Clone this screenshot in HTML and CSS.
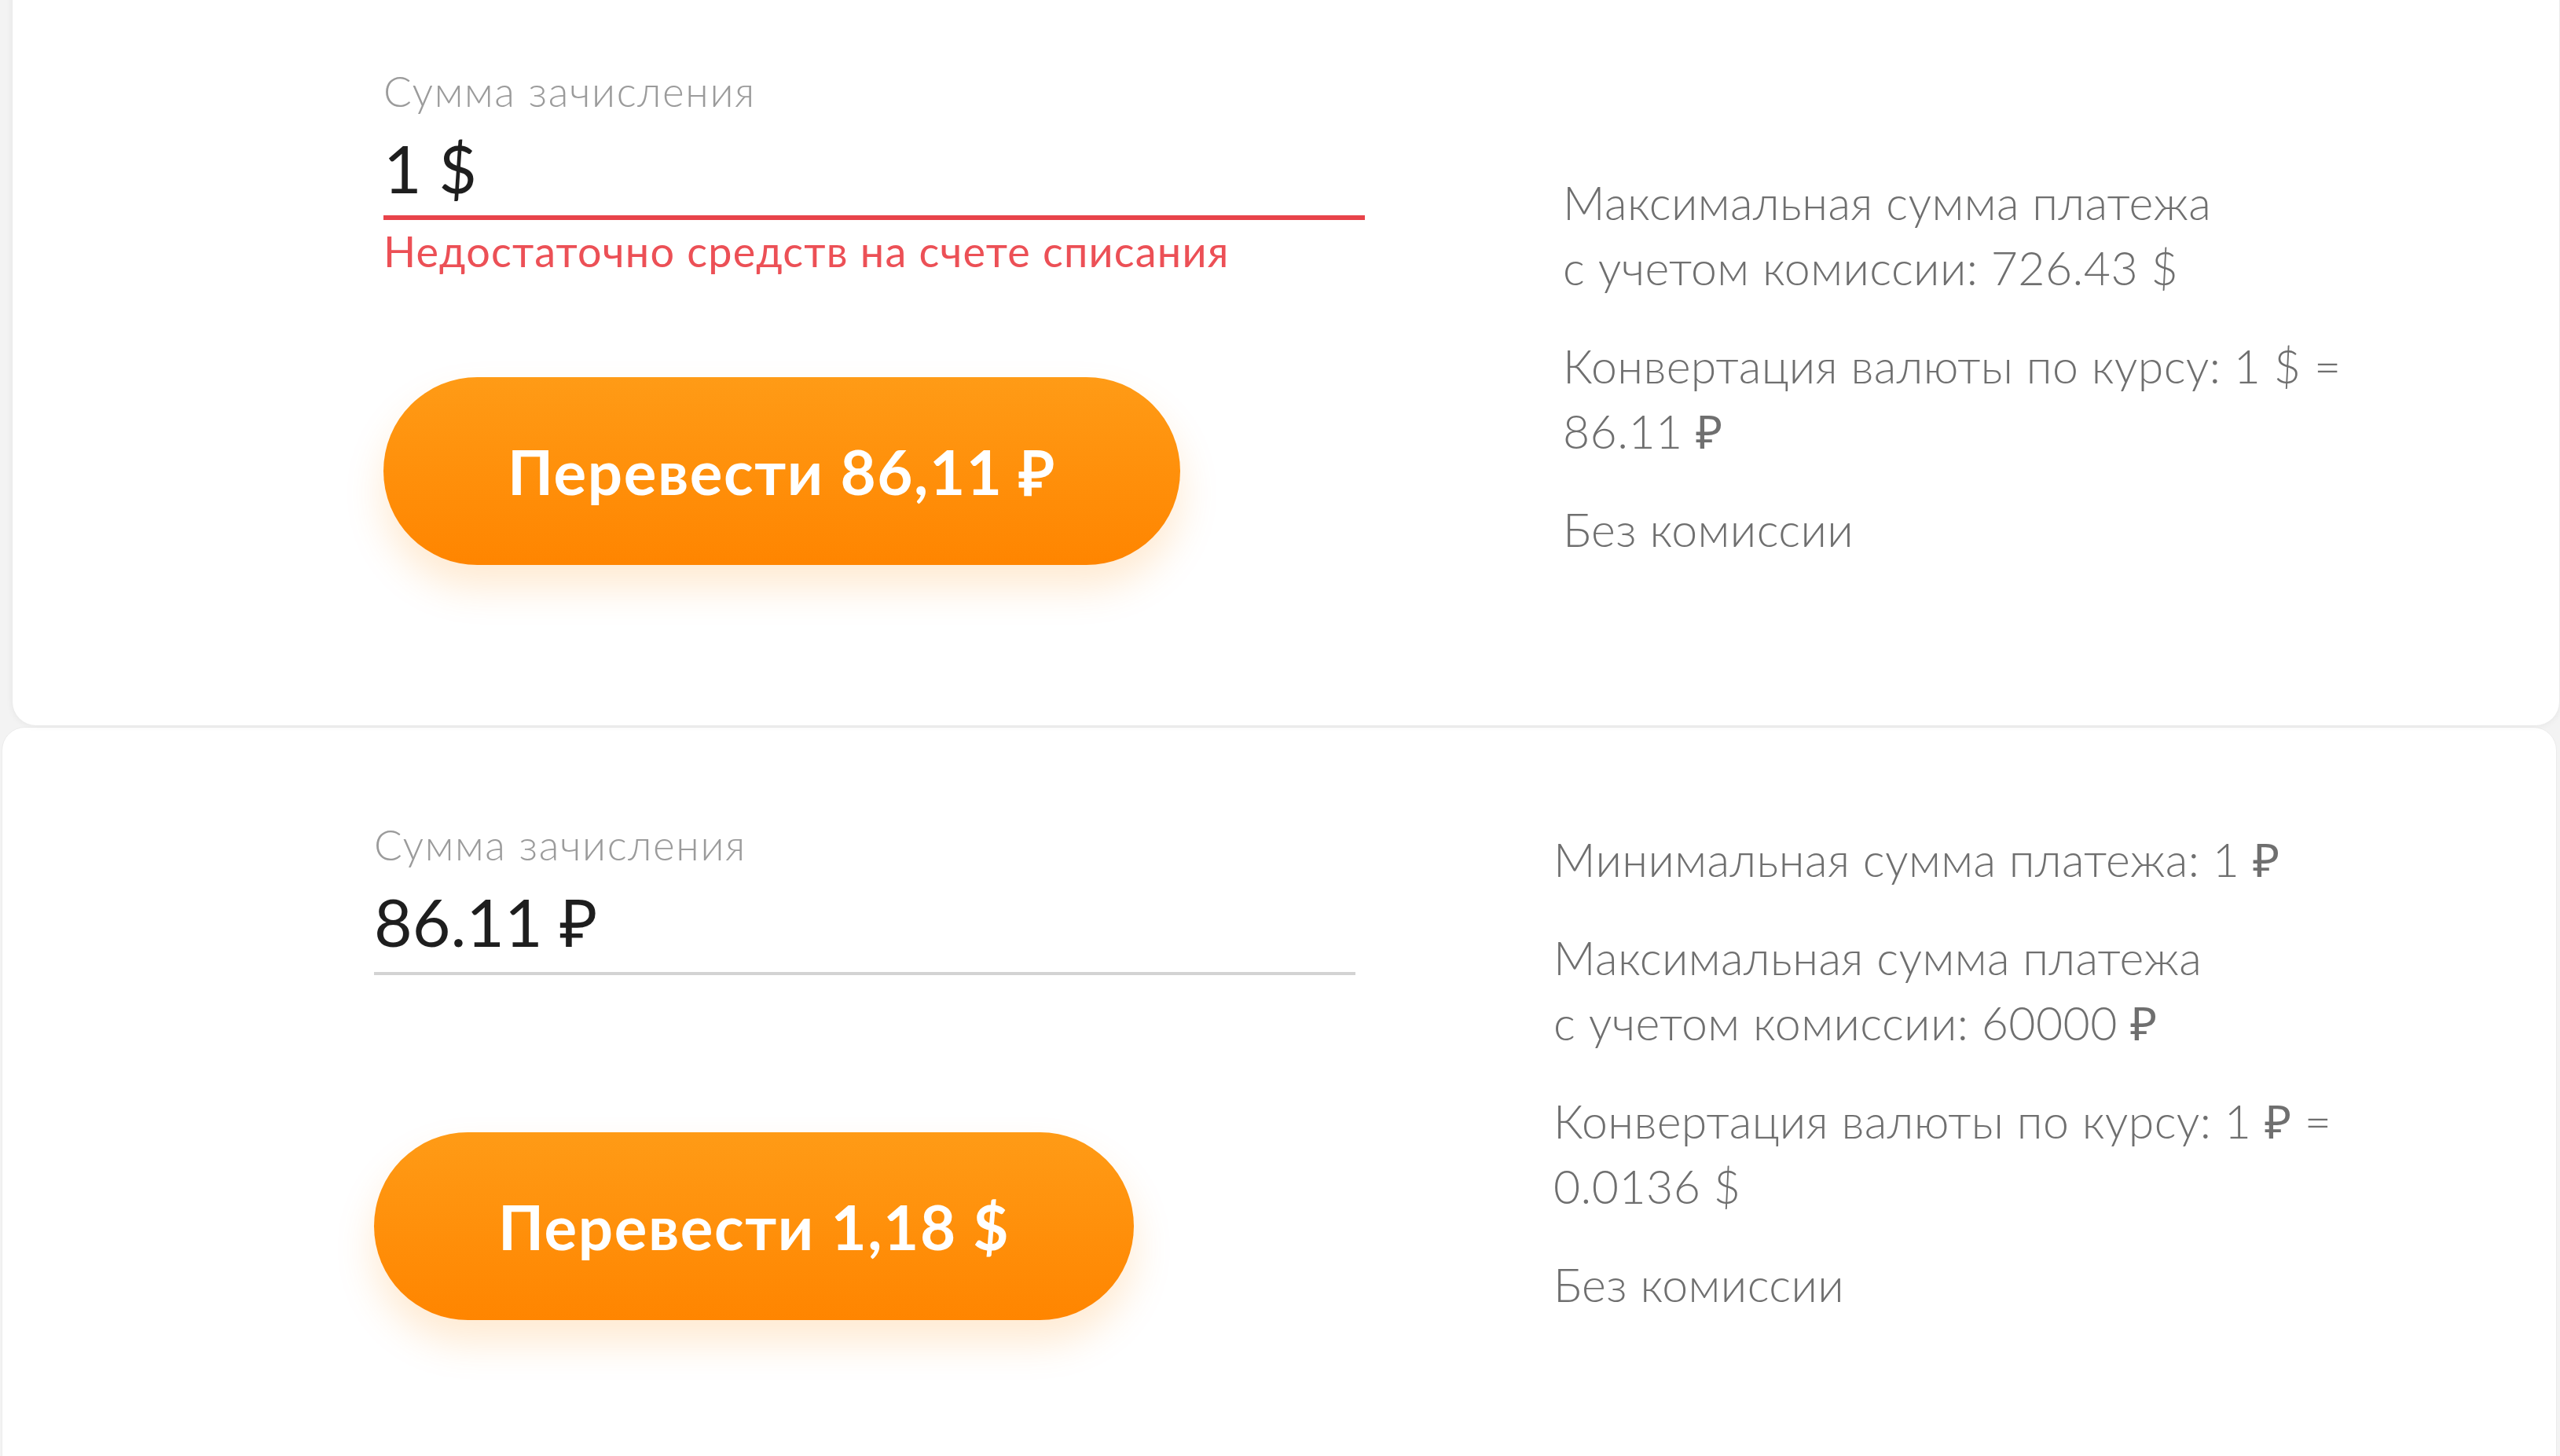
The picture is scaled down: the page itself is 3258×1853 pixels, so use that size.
FILE: index.html
```html
<!DOCTYPE html>
<html lang="ru">
<head>
<meta charset="utf-8">
<title>Перевод</title>
<link rel="stylesheet" href="styles.css">
</head>
<body>
<div class="page">
  <section class="card card--first">
    <div class="row">
      <div class="form-col">
        <div class="field-label">Сумма зачисления</div>
        <div class="field-input field-input--error">1 $</div>
        <div class="field-hint field-hint--error">Недостаточно средств на счете списания</div>
        <button class="btn" type="button">Перевести 86,11 ₽</button>
      </div>
      <div class="info-col">
        <p class="info">Максимальная сумма платежа<br>с учетом комиссии: 726.43 $</p>
        <p class="info">Конвертация валюты по курсу: 1 $ =<br>86.11 ₽</p>
        <p class="info">Без комиссии</p>
      </div>
    </div>
  </section>
  <section class="card card--second">
    <div class="row">
      <div class="form-col">
        <div class="field-label">Сумма зачисления</div>
        <div class="field-input">86.11 ₽</div>
        <div class="field-hint"></div>
        <button class="btn" type="button">Перевести 1,18 $</button>
      </div>
      <div class="info-col">
        <p class="info">Минимальная сумма платежа: 1 ₽</p>
        <p class="info">Максимальная сумма платежа<br>с учетом комиссии: 60000 ₽</p>
        <p class="info">Конвертация валюты по курсу: 1 ₽ =<br>0.0136 $</p>
        <p class="info">Без комиссии</p>
      </div>
    </div>
  </section>
</div>
</body>
</html>
```

FILE: styles.css
```css
html, body {
  margin: 0;
  padding: 0;
}
body {
  background: #f3f3f3;
  font-family: Lato, "Open Sans", "Liberation Sans", sans-serif;
  overflow: hidden;
  height: 1853px;
}
.page {
  display: flex;
  flex-direction: column;
}
.card {
  background: #ffffff;
  box-sizing: border-box;
  height: 960px;
  padding: 121px 0 204px 472px;
}
.card--first {
  margin: -37px 1px 0 16px;
  border-radius: 0 0 30px 30px;
  box-shadow: 0 0 10px rgba(0, 0, 0, 0.07);
  position: relative;
  z-index: 1;
}
.card--second {
  margin: 2px 4px 0 2px;
  border-radius: 30px 30px 0 0;
  border: 1px solid #ececec;
  padding-left: 473px;
}
.row {
  display: flex;
  align-items: flex-end;
  gap: 252px;
  height: 100%;
}
.form-col {
  width: 1249px;
  flex: none;
  display: flex;
  flex-direction: column;
  align-items: flex-start;
}
.field-label {
  font-size: 53px;
  font-weight: 300;
  letter-spacing: 1.6px;
  line-height: 60px;
  color: #9b9b9b;
}
.field-input {
  align-self: stretch;
  margin-top: 18px;
  font-size: 84px;
  line-height: 100px;
  color: #1e1e1e;
  padding-bottom: 14px;
  border-bottom: 4px solid #d3d3d3;
}
.field-input--error {
  padding-bottom: 10px;
  border-bottom: 6px solid #e8434a;
}
.field-hint {
  height: 70px;
  padding-top: 10px;
  box-sizing: border-box;
  font-size: 54px;
  font-weight: 400;
  letter-spacing: 1.2px;
  line-height: 60px;
  white-space: nowrap;
}
.field-hint--error {
  color: #ec5056;
}
.btn {
  margin-top: 130px;
  height: 239px;
  padding: 0 158px;
  border: none;
  border-radius: 120px;
  background: linear-gradient(180deg, #ff9b16 0%, #ff8500 100%);
  box-shadow: 0 28px 50px rgba(255, 138, 0, 0.18);
  color: #ffffff;
  font-family: Lato, "Open Sans", "Liberation Sans", sans-serif;
  font-weight: 700;
  font-size: 78px;
  letter-spacing: 1.6px;
  white-space: nowrap;
}
.info-col {
  display: flex;
  flex-direction: column;
  gap: 42px;
  margin-bottom: 4px;
}
.info {
  margin: 0;
  font-size: 59px;
  font-weight: 300;
  letter-spacing: 0.4px;
  line-height: 83px;
  color: #6f6f6f;
  white-space: nowrap;
}
```
